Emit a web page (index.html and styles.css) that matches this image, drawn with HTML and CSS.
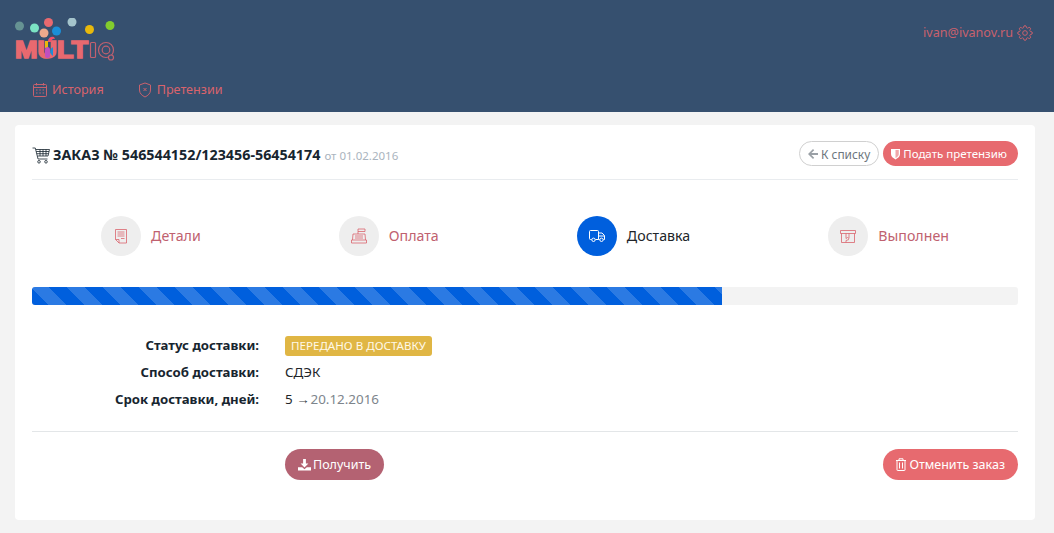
FILE: index.html
```html
<!DOCTYPE html>
<html lang="ru">

<head>
    <meta charset="UTF-8">
    <meta name="viewport" content="width=device-width, initial-scale=1.0">
    <title>Заказ</title>
    <link rel="stylesheet" href="styles.css">
</head>

<body>
    <header class="header">
        <div class="header-top">
            <svg class="logo" width="100" height="44" viewBox="0 0 100 44">
                <circle cx="4.5" cy="8" r="4.5" fill="#669393"/>
                <circle cx="19.5" cy="10" r="4.5" fill="#7be3c4"/>
                <circle cx="33.5" cy="4.5" r="4.5" fill="#e8696f"/>
                <circle cx="29" cy="15" r="4.5" fill="#eeaa8c"/>
                <circle cx="41.5" cy="13" r="4.5" fill="#1b8fd8"/>
                <circle cx="57" cy="4" r="4.5" fill="#a4c4cc"/>
                <circle cx="74.5" cy="11.5" r="4.5" fill="#e8b90c"/>
                <circle cx="95" cy="7.5" r="4.5" fill="#82cc2e"/>
                <text class="logo-mult" x="0" y="39.500" textLength="73" lengthAdjust="spacingAndGlyphs">MULT</text>
                <rect x="75.500" y="24.500" width="5" height="15" rx="1" fill="none" stroke="#c0606f" stroke-width="1.2"/>
                <circle cx="91" cy="32" r="7.500" fill="none" stroke="#c0606f" stroke-width="1.2"/>
                <circle cx="91" cy="32" r="3.800" fill="none" stroke="#c0606f" stroke-width="1.200"/>
                <circle cx="96" cy="39.500" r="2.500" fill="#36506f" stroke="#c0606f" stroke-width="1.200"/>
                <rect x="30" y="23" width="3" height="7" fill="#e8b90c"/>
                <rect x="30" y="29" width="5" height="11" rx="2.500" fill="#c04fc0"/>
                <path d="M38 29a5 5 0 0 0 0 9z" fill="#1b8fd8"/>
                <path d="M33 24a4.500 4.500 0 0 1 6-5l1 2a3 3 0 0 0-4 3z" fill="#f2506a"/>
            </svg>
            <div class="user">
                <span>ivan@ivanov.ru</span>
                <svg class="icon-gear" width="16" height="16" viewBox="0 0 24 24">
                    <circle cx="12" cy="12" r="3.500"/>
                    <path d="M19.400 15a1.650 1.650 0 0 0 .33 1.820l.06.06a2 2 0 0 1 0 2.830 2 2 0 0 1-2.830 0l-.06-.06a1.650 1.650 0 0 0-1.820-.33 1.650 1.650 0 0 0-1 1.510V21a2 2 0 0 1-2 2 2 2 0 0 1-2-2v-.09A1.650 1.650 0 0 0 9 19.400a1.650 1.650 0 0 0-1.820.33l-.06.06a2 2 0 0 1-2.830 0 2 2 0 0 1 0-2.830l.06-.06a1.650 1.650 0 0 0 .33-1.820 1.650 1.650 0 0 0-1.510-1H3a2 2 0 0 1-2-2 2 2 0 0 1 2-2h.09A1.650 1.650 0 0 0 4.600 9a1.650 1.650 0 0 0-.33-1.820l-.06-.06a2 2 0 0 1 0-2.830 2 2 0 0 1 2.830 0l.06.06a1.650 1.650 0 0 0 1.820.33H9a1.650 1.650 0 0 0 1-1.510V3a2 2 0 0 1 2-2 2 2 0 0 1 2 2v.09a1.650 1.650 0 0 0 1 1.510 1.650 1.650 0 0 0 1.820-.33l.06-.06a2 2 0 0 1 2.830 0 2 2 0 0 1 0 2.830l-.06.06a1.650 1.650 0 0 0-.33 1.820V9a1.650 1.650 0 0 0 1.510 1H21a2 2 0 0 1 2 2 2 2 0 0 1-2 2h-.09a1.650 1.650 0 0 0-1.510 1z"/>
                </svg>
            </div>
        </div>
        <nav class="nav">
            <a class="nav-link">
                <svg class="icon-line" width="16" height="16" viewBox="0 0 16 16">
                    <rect x="1.500" y="2.500" width="13" height="12" rx="1"/>
                    <path d="M1.500 5.500h13M4.500 1v2.500M11.500 1v2.500M4 8h1.500M7.300 8h1.500M10.600 8h1.500M4 11h1.500M7.300 11h1.500M10.600 11h1.500"/>
                </svg>
                История
            </a>
            <a class="nav-link">
                <svg class="icon-line" width="16" height="16" viewBox="0 0 16 16">
                    <path d="M8 1l5.500 2v5c0 3.500-2.500 5.500-5.500 7-3-1.500-5.500-3.500-5.500-7V3z"/>
                    <path d="M6.500 6l3 3M9.500 6l-3 3"/>
                </svg>
                Претензии
            </a>
        </nav>
    </header>

    <main class="card">
        <div class="order-head">
            <div class="order-title">
                <svg class="cart" width="18" height="17" viewBox="0 0 18 17">
                    <path d="M.5 1h2.800l2.700 11h9.500M3.800 2.500H17.500l-1.500 6.500H5.400M4.200 4.500h12.800M4.700 6.700h11.800M8 2.500V9M11 2.500V9M14 2.500V9"/>
                    <circle cx="7" cy="14.800" r="1.300"/>
                    <circle cx="14" cy="14.800" r="1.300"/>
                </svg>
                <h1>ЗАКАЗ № 546544152/123456-56454174</h1>
                <span class="order-date">от 01.02.2016</span>
            </div>
            <div class="order-actions">
                <a class="btn-small btn-outline">
                    <svg width="12" height="12" viewBox="0 0 12 12"><path d="M6 1L1 6l5 5 1.200-1.200L4.400 7H11V5H4.400l2.800-2.800z" fill="#9aa0a6"/></svg>
                    К списку
                </a>
                <a class="btn-small btn-red">
                    <svg width="11" height="12" viewBox="0 0 11 12"><path d="M1 1h9v5c0 2.500-2 4-4.500 5.500C3 10 1 8.500 1 6z" fill="#fff"/><path d="M5.500 2v8C7.500 9 8.800 7.800 8.800 6V2z" fill="#e76a6f" opacity=".6"/></svg>
                    Подать претензию
                </a>
            </div>
        </div>

        <div class="steps">
            <div class="step">
                <div class="step-circle">
                    <svg class="icon-step" width="12" height="15" viewBox="0 0 12 15">
                        <path d="M.5.500h11v13.500H4l-3.500-3.500zM4 14v-3.500H.5M2.500 3h7M2.500 5h7M2.500 7h7M6 9.500h3.500"/>
                    </svg>
                </div>
                <span class="step-label">Детали</span>
            </div>
            <div class="step">
                <div class="step-circle">
                    <svg class="icon-step" width="16" height="16" viewBox="0 0 16 16">
                        <path d="M.5 15h15v-3H.5zM1.500 12l.5-6h12l.5 6M7 6V3.500h7V1H7v2.500M4 8h8M4 10h8"/>
                    </svg>
                </div>
                <span class="step-label">Оплата</span>
            </div>
            <div class="step step-active">
                <div class="step-circle">
                    <svg class="icon-truck" width="16" height="12" viewBox="0 0 16 12">
                        <path d="M2.500 9.500H1.500a1 1 0 0 1-1-1V1.500a1 1 0 0 1 1-1h7a1 1 0 0 1 1 1v8H6.500M9.500 3H13l2.500 2.500v4H14.500M10.500 9.500h-1M9.500 6h6"/>
                        <circle cx="4.500" cy="9.800" r="1.700"/>
                        <circle cx="12.500" cy="9.800" r="1.700"/>
                    </svg>
                </div>
                <span class="step-label">Доставка</span>
            </div>
            <div class="step">
                <div class="step-circle">
                    <svg class="icon-step" width="16" height="13" viewBox="0 0 16 13">
                        <path d="M.5.500h15v3H.5zM1.500 3.500v9h13v-9M6 3.500v5l1.500-1 1.500 1v-5M6 12.500v-2l3-1"/>
                    </svg>
                </div>
                <span class="step-label">Выполнен</span>
            </div>
        </div>

        <div class="progress">
            <div class="progress-bar" style="width: 70%"></div>
        </div>

        <div class="details">
            <div class="details-label">Статус доставки:</div>
            <div class="details-value"><span class="badge">ПЕРЕДАНО В ДОСТАВКУ</span></div>
            <div class="details-label">Способ доставки:</div>
            <div class="details-value">СДЭК</div>
            <div class="details-label">Срок доставки, дней:</div>
            <div class="details-value">5 <span class="arrow">→</span><span class="muted">20.12.2016</span></div>
        </div>

        <div class="order-footer">
            <a class="btn btn-dark-red">
                <svg width="13" height="13" viewBox="0 0 14 14"><path d="M5.500 1h3v5h2.700L7 10.200 2.800 6h2.700zM0 10h4.500L7 12l2.500-2H14v3.500H0z" fill="#fff"/></svg>
                Получить
            </a>
            <a class="btn btn-red">
                <svg class="icon-trash" width="10" height="13" viewBox="0 0 10 13"><path d="M0 2.500h10M3 2.500V.8h4v1.700M1 2.500v9.500a.5.5 0 0 0 .5.5h7a.5.5 0 0 0 .5-.5V2.500M3.500 4.500v6M6.500 4.500v6"/></svg>
                Отменить заказ
            </a>
        </div>
    </main>
</body>

</html>
```

FILE: styles.css
```css
* {
    margin: 0;
    padding: 0;
    box-sizing: border-box;
}

body {
    font-family: "Noto Sans", "Open Sans", sans-serif;
    background-color: #f3f3f3;
    color: #212529;
    font-size: 14px;
    height: 533px;
    overflow: hidden;
}

.header {
    background: #36506f;
    height: 112px;
    padding: 18px 15px 0;
}

.header-top {
    display: flex;
    justify-content: space-between;
    align-items: flex-start;
    height: 44px;
}

.logo {
    display: block;
}

.logo-mult {
    font-family: "Liberation Sans", sans-serif;
    font-weight: 700;
    font-size: 23px;
    fill: #e8696f;
    stroke: #e8696f;
    stroke-width: 1.6px;
}

.user {
    display: flex;
    align-items: center;
    gap: 4px;
    margin: 6px 6px 0 0;
    font-size: 12.600px;
    color: #c9616d;
}

.icon-gear {
    fill: none;
    stroke: #c9616d;
    stroke-width: 1.500;
}

.icon-line {
    fill: none;
    stroke: #c9616d;
    stroke-width: 1;
}

.nav {
    display: flex;
    gap: 33px;
    padding: 19px 0 0 17px;
}

.nav-link {
    display: flex;
    align-items: center;
    gap: 4px;
    font-size: 12.600px;
    color: #d9636c;
}

.card {
    background: white;
    border-radius: 4px;
    width: 1020px;
    height: 395px;
    margin: 13px 0 0 15px;
    padding: 16px 17px;
}

.order-head {
    display: flex;
    justify-content: space-between;
    align-items: flex-start;
    height: 39px;
    border-bottom: 1px solid #e9ecef;
}

.order-title {
    display: flex;
    align-items: center;
    gap: 3px;
    height: 28px;
    margin-top: -2px;
    padding-top: 2px;
}

.cart {
    fill: none;
    stroke: #17252f;
    stroke-width: .8;
    margin-top: 2px;
}

h1 {
    font-size: 14.300px;
    font-weight: 700;
    color: #17252f;
}

.order-date {
    margin: 3px 0 0 1px;
    font-size: 11.500px;
    color: #aab4be;
}

.order-actions {
    display: flex;
    gap: 4px;
}

.btn-small {
    display: flex;
    align-items: center;
    gap: 2px;
    height: 25px;
    padding: 0 11px 0 7px;
    border-radius: 13px;
    font-size: 11.500px;
}

.btn-outline {
    border: 1px solid #d0d0d0;
    color: #6c757d;
    padding: 0 8px 0 7px;
    font-size: 11.900px;
}

.btn-red {
    background: #e76a6f;
    color: white;
}

.steps {
    display: flex;
    justify-content: space-around;
    margin-top: 36px;
}

.step {
    display: flex;
    align-items: center;
    gap: 10px;
}

.step-circle {
    display: flex;
    align-items: center;
    justify-content: center;
    width: 40px;
    height: 40px;
    border-radius: 50%;
    background: #eeeeee;
}

.step-label {
    font-size: 14.200px;
    color: #c0616f;
    margin-top: -2px;
}

.step-active .step-circle {
    background: #005fdd;
}

.step-active .step-label {
    color: #212529;
}

.icon-step {
    fill: none;
    stroke: #d9636c;
    stroke-width: .8;
}

.icon-truck {
    fill: none;
    stroke: white;
    stroke-width: 1;
}

.progress {
    background: #f3f3f3;
    border-radius: 3px;
    height: 18px;
    margin-top: 31px;
    overflow: hidden;
}

.progress-bar {
    height: 100%;
    background-color: #005fdd;
    background-image: linear-gradient(45deg, rgba(255, 255, 255, .17) 25%, transparent 25%, transparent 50%, rgba(255, 255, 255, .17) 50%, rgba(255, 255, 255, .17) 75%, transparent 75%, transparent);
    background-size: 36px 36px;
    background-position: -2px 0;
}

.details {
    display: grid;
    grid-template-columns: 227px 1fr;
    column-gap: 26px;
    grid-auto-rows: 27px;
    align-items: center;
    margin-top: 27px;
    font-size: 13.400px;
}

.details-label {
    font-size: 13.200px;
    font-weight: 700;
    text-align: right;
    color: #17252f;
    margin-top: -1px;
}

.details-value {
    color: #212529;
    margin-top: -1px;
}

.badge {
    display: inline-block;
    background: #e0b644;
    color: #fff9e8;
    border-radius: 3px;
    height: 20px;
    line-height: 20px;
    padding: 0 6px;
    margin-top: 1px;
    font-size: 11.600px;
}

.arrow {
    font-family: "Liberation Sans", sans-serif;
    color: #3a4248;
    margin-right: 1px;
}

.muted {
    color: #7d858c;
}

.order-footer {
    display: flex;
    justify-content: space-between;
    margin-top: 18px;
    padding: 17px 0 0 253px;
    border-top: 1px solid #e3e6e8;
}

.btn {
    display: flex;
    align-items: center;
    gap: 3px;
    height: 31px;
    padding: 0 13px;
    border-radius: 16px;
    font-size: 12.500px;
    color: white;
}

.btn-dark-red {
    background: #b46272;
    gap: 2px;
}

.icon-trash {
    fill: none;
    stroke: white;
    stroke-width: 1;
}
```
